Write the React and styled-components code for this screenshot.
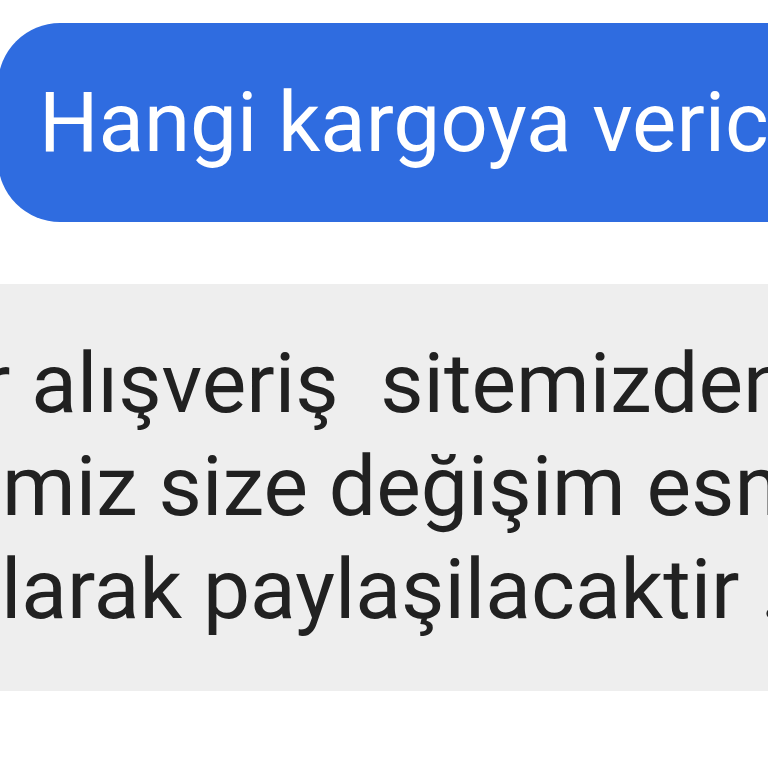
import React from "react";
import styled, { createGlobalStyle } from "styled-components";

const Global = createGlobalStyle`
  html, body { margin: 0; padding: 0; background: #ffffff; }
  body { font-family: Roboto, "Noto Sans", "Liberation Sans", sans-serif; }
`;

const Page = styled.div`
  width: 768px;
  height: 768px;
  overflow: hidden;
  display: flex;
  flex-direction: column;
  background: #ffffff;
  padding-top: 23px;
  box-sizing: border-box;
`;

const OutRow = styled.div`
  display: flex;
  margin-left: -2px;
`;

const OutBubble = styled.div`
  flex: 0 0 auto;
  width: 900px;
  height: 199px;
  box-sizing: border-box;
  background: #2f6ce0;
  border-radius: 62px 0 0 62px;
  display: flex;
  align-items: center;
  padding-left: 41px;
  color: #ffffff;
  font-size: 83.5px;
  white-space: pre;
  overflow: hidden;
`;

const InRow = styled.div`
  margin-top: 62px;
  display: flex;
`;

const InBubble = styled.div`
  flex: 0 0 auto;
  width: 1000px;
  height: 407px;
  box-sizing: border-box;
  background: #eeeeee;
  padding-top: 48px;
  color: #212121;
  font-size: 84px;
  line-height: 103px;
  overflow: hidden;
`;

const Line = styled.div`
  white-space: pre;
  margin-left: ${(p) => p.$shift}px;
`;

export default function App() {
  return (
    <>
      <Global />
      <Page>
        <OutRow>
          <OutBubble>Hangi kargoya verici</OutBubble>
        </OutRow>
        <InRow>
          <InBubble>
            <Line $shift={-18}>r alışveriş  sitemizden</Line>
            <Line $shift={2}>miz size değişim esnasında</Line>
            <Line $shift={-47}>olarak paylaşilacaktir .</Line>
          </InBubble>
        </InRow>
      </Page>
    </>
  );
}
